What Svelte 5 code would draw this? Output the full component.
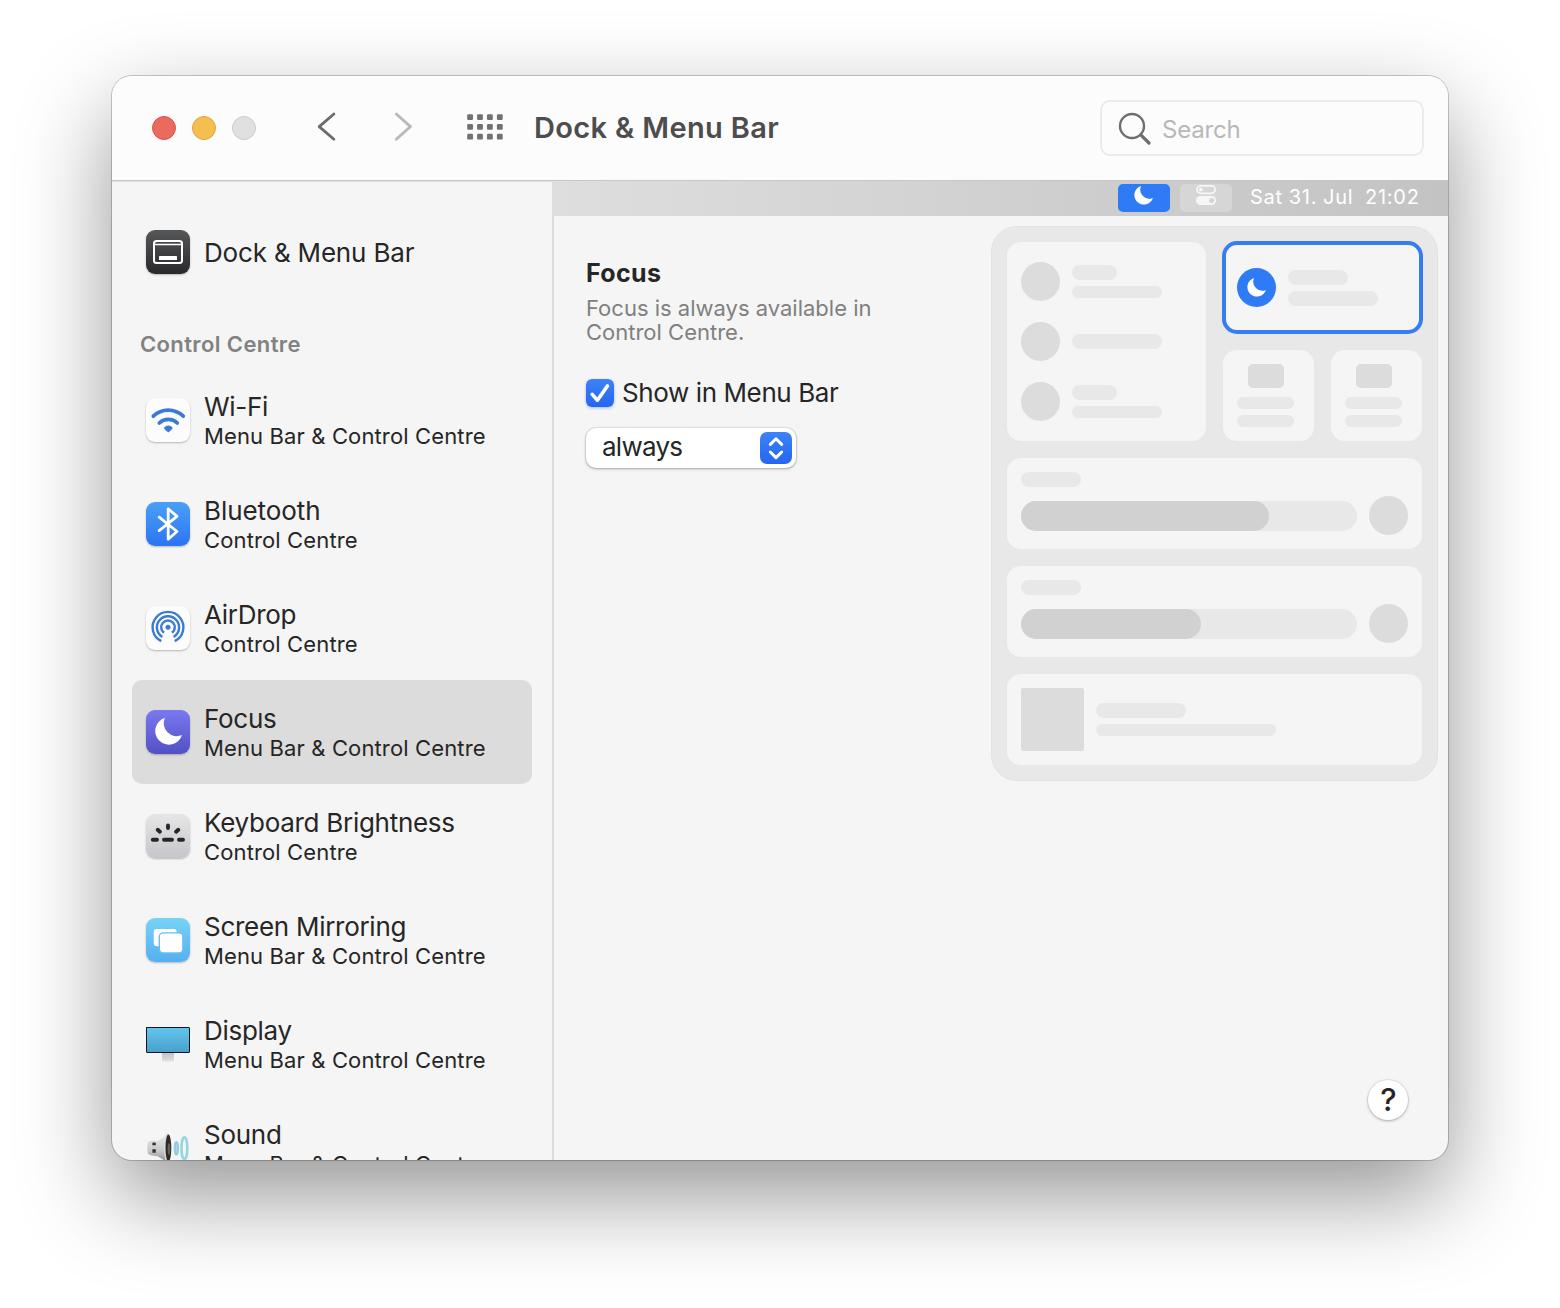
<script>
  const items = [
    { id: 'wifi', title: 'Wi-Fi', sub: 'Menu Bar & Control Centre', tile: 'white' },
    { id: 'bluetooth', title: 'Bluetooth', sub: 'Control Centre', tile: 'blue' },
    { id: 'airdrop', title: 'AirDrop', sub: 'Control Centre', tile: 'white' },
    { id: 'focus', title: 'Focus', sub: 'Menu Bar & Control Centre', tile: 'purple' },
    { id: 'keyboard', title: 'Keyboard Brightness', sub: 'Control Centre', tile: 'grey' },
    { id: 'mirroring', title: 'Screen Mirroring', sub: 'Menu Bar & Control Centre', tile: 'sky' },
    { id: 'display', title: 'Display', sub: 'Menu Bar & Control Centre', tile: 'plain' },
    { id: 'sound', title: 'Sound', sub: 'Menu Bar & Control Centre', tile: 'plain' }
  ];
  const sliders = [248, 180];
  let selected = $state('focus');
  let show = $state(true);
</script>

{#snippet moon()}
  <path d="M19 7.8A13.7 13.7 0 1 0 36 25A12.9 12.9 0 0 1 19 7.8Z" fill="#fff" />
{/snippet}

{#snippet icon(id)}
  <svg viewBox="0 0 44 44" width="44" height="44" fill="none" stroke-linecap="round" stroke-linejoin="round">
    {#if id === 'dock'}
      <rect x="8" y="11" width="28" height="22" rx="2.5" stroke="#fff" stroke-width="2" />
      <path d="M8 14.5H36" stroke="#fff" stroke-width="1.6" />
      <rect x="13" y="26" width="18" height="4" rx="0.6" fill="#fff" />
    {:else if id === 'wifi'}
      <g stroke="#3b7bd6" stroke-width="3.7">
        <path d="M7.3 18.2A21.6 21.6 0 0 1 37.3 18.2" />
        <path d="M13.3 25A13 13 0 0 1 31.3 25" />
      </g>
      <path d="M17.8 29.8Q22.3 25.2 26.8 29.8Q26 32 22.3 34.6Q18.6 32 17.8 29.8Z" fill="#3b7bd6" />
    {:else if id === 'bluetooth'}
      <path d="M13.2 15.2L31 29.5L22.2 37.2V6.8L31 14.4L13.2 28.6" stroke="#fff" stroke-width="2.8" />
    {:else if id === 'airdrop'}
      <circle cx="22" cy="21.3" r="2.5" fill="#3b7bd6" />
      <g stroke="#3b7bd6" stroke-width="2.4" stroke-linecap="butt">
        <path d="M15.3 35.1A15.4 15.4 0 1 1 28.7 35.1" />
        <path d="M16.4 30.9A11.1 11.1 0 1 1 27.6 30.9" />
        <path d="M18 26.8A6.8 6.8 0 1 1 26 26.8" />
      </g>
    {:else if id === 'focus'}
      {@render moon()}
    {:else if id === 'keyboard'}
      <path d="M22 11.4V14M11.7 15.7L13.9 17.7M32.3 15.7L30.1 17.7M6.8 25.8H11M18 25.8H26M33 25.8H37" stroke="#262628" stroke-width="3.9" />
    {:else if id === 'mirroring'}
      <rect x="7.7" y="11" width="23" height="17.3" rx="3" fill="#fff" />
      <rect x="13.3" y="14.9" width="23.6" height="20" rx="3.8" fill="#fff" stroke="#66bff3" stroke-width="1.4" />
    {:else if id === 'display'}
      <defs>
        <linearGradient id="screen" x1="0" y1="0" x2="0" y2="1">
          <stop offset="0" stop-color="#62c6ee" /><stop offset="1" stop-color="#4a9fcb" />
        </linearGradient>
        <linearGradient id="stand" x1="0" y1="0" x2="0" y2="1">
          <stop offset="0" stop-color="#bfbfc2" /><stop offset="1" stop-color="#e2e2e4" />
        </linearGradient>
      </defs>
      <rect x="16" y="30" width="12" height="9.5" rx="1" fill="url(#stand)" />
      <rect x="0.5" y="5.5" width="43" height="25" rx="0.4" fill="url(#screen)" stroke="#10191f" />
    {:else if id === 'sound'}
      <defs>
        <linearGradient id="cone" x1="0" y1="0" x2="0" y2="1">
          <stop offset="0" stop-color="#ececec" /><stop offset="0.6" stop-color="#c8c8c8" /><stop offset="1" stop-color="#868686" />
        </linearGradient>
      </defs>
      <path d="M2 16Q0.5 22 2 28Q6 30.5 11 30Q17 33 21.5 37V7.3Q17 13 11 15Q6 14 2 16Z" fill="url(#cone)" />
      <path d="M6.4 16.8Q8 16.2 9.8 16.8V19.2H6.4ZM6.4 23.2H9.8V26.8H6.4Z" fill="#333" />
      <ellipse cx="21.6" cy="22" rx="3.6" ry="14.8" fill="#dadada" />
      <ellipse cx="22.4" cy="22" rx="2.9" ry="13.6" fill="#2e2a28" />
      <ellipse cx="23" cy="23" rx="1.3" ry="6" fill="#655f5b" />
      <ellipse cx="30.4" cy="22.3" rx="1.7" ry="6.4" stroke="#8fcfdc" stroke-width="2" fill="#a9d8e2" />
      <ellipse cx="38.4" cy="22.3" rx="2.9" ry="11" stroke="#97d5e1" stroke-width="2.6" />
    {/if}
  </svg>
{/snippet}

{#snippet bar(size)}<span class="bar {size}"></span>{/snippet}

<div class="desktop">
  <div class="window">
    <header class="toolbar">
      <div class="lights"><i class="red"></i><i class="amber"></i><i class="off"></i></div>
      <svg class="nav" width="96" height="30" viewBox="0 0 96 30" fill="none" stroke-width="2.8" stroke-linecap="round" stroke-linejoin="round">
        <path d="M17.9 2L3.2 14.6L17.9 27.2" stroke="#6b6b6b" />
        <path d="M80.3 2L94.4 14.6L80.3 27.2" stroke="#b9b9b9" />
      </svg>
      <svg class="grid" width="36" height="26" viewBox="0 0 36 26" fill="#717171">
        {#each [0, 1, 2] as r}
          {#each [0, 1, 2, 3] as c}
            <rect x={0.2 + c * 9.9} y={0.2 + r * 9.8} width="5.8" height="5.8" rx="1.2" />
          {/each}
        {/each}
      </svg>
      <h1>Dock &amp; Menu Bar</h1>
      <label class="search">
        <svg width="34" height="34" viewBox="0 0 34 34" fill="none" stroke="#6e6e6e" stroke-linecap="round">
          <circle cx="14" cy="14" r="12" stroke-width="2.4" />
          <path d="M22.8 22.8L31 31" stroke-width="3.2" />
        </svg>
        <span>Search</span>
      </label>
    </header>

    <div class="body">
      <aside>
        <div class="row first">
          <span class="tile dark">{@render icon('dock')}</span>
          <span class="labels"><span class="title dock">Dock &amp; Menu Bar</span></span>
        </div>
        <h2>Control Centre</h2>
        {#each items as item}
          <button class="row" class:selected={selected === item.id} onclick={() => (selected = item.id)}>
            <span class="tile {item.tile}">{@render icon(item.id)}</span>
            <span class="labels">
              <span class="title {item.id}">{item.title}</span>
              <span class="sub">{item.sub}</span>
            </span>
          </button>
        {/each}
      </aside>

      <main>
        <div class="menubar">
          <span class="pill active">
            <svg width="19" height="19" viewBox="8.8 7.8 27.2 27.4">{@render moon()}</svg>
          </span>
          <span class="pill">
            <svg width="20" height="20" viewBox="0 0 20 20" fill="none">
              <rect x="0.9" y="0.9" width="18.2" height="7.4" rx="3.7" stroke="#f6f6f6" stroke-width="1.8" />
              <circle cx="4.8" cy="4.6" r="2" fill="#f6f6f6" />
              <rect x="0" y="11" width="20" height="9" rx="4.5" fill="#f6f6f6" />
              <circle cx="15.6" cy="15.5" r="2.5" fill="#d4d4d4" />
            </svg>
          </span>
          <span class="clock">Sat 31. Jul&nbsp; 21:02</span>
        </div>

        <div class="content">
          <section class="settings">
            <h3>Focus</h3>
            <p>Focus is always available in<br />Control Centre.</p>
            <button class="check" onclick={() => (show = !show)}>
              <span class="box">
                {#if show}
                  <svg width="28" height="28" viewBox="0 0 28 28" fill="none"><path d="M6.2 15.4L11.4 21.2L21.4 7" stroke="#fff" stroke-width="3.6" stroke-linecap="round" stroke-linejoin="round" /></svg>
                {/if}
              </span>
              <span>Show in Menu Bar</span>
            </button>
            <div class="select">
              <span>always</span>
              <svg width="32" height="32" viewBox="0 0 32 32" fill="none" stroke="#fff" stroke-width="3" stroke-linecap="round" stroke-linejoin="round">
                <path d="M10.3 12.4L16 6.8L21.7 12.4M10.3 20L16 25.6L21.7 20" />
              </svg>
            </div>
          </section>

          <section class="panel">
            <div class="top">
              <div class="card toggles">
                <div class="line"><i class="dot"></i><div class="bars">{@render bar('w45')}{@render bar('w90 thin')}</div></div>
                <div class="line"><i class="dot"></i><div class="bars">{@render bar('w90')}</div></div>
                <div class="line"><i class="dot"></i><div class="bars">{@render bar('w45')}{@render bar('w90 thin')}</div></div>
              </div>
              <div class="right">
                <div class="card focus-card">
                  <i class="dot on"><svg width="19" height="19" viewBox="8.8 7.8 27.2 27.4">{@render moon()}</svg></i>
                  <div class="bars">{@render bar('w60')}{@render bar('w90')}</div>
                </div>
                <div class="pair">
                  {#each [0, 1] as _}
                    <div class="card small"><i class="block"></i>{@render bar('w57 thin')}{@render bar('w57 thin')}</div>
                  {/each}
                </div>
              </div>
            </div>
            {#each sliders as width}
              <div class="card slider">
                {@render bar('w60')}
                <div class="control">
                  <div class="track"><div class="fill" style="width: {width}px"></div></div>
                  <i class="dot"></i>
                </div>
              </div>
            {/each}
            <div class="card media">
              <i class="art"></i>
              <div class="bars">{@render bar('w90')}{@render bar('w180 thin')}</div>
            </div>
          </section>
        </div>
        <button class="help" aria-label="Help">?</button>
      </main>
    </div>
  </div>
</div>

<style>
  :global(body) { background: #fff; }
  * { box-sizing: border-box; }
  .desktop {
    width: 1560px; height: 1308px; padding: 76px 112px 148px; overflow: hidden;
    font-family: Inter, 'Liberation Sans', sans-serif; color: #262626;
  }
  button { font: inherit; color: inherit; border: 0; background: none; padding: 0; text-align: left; }
  h1, h2, h3, p { margin: 0; }
  svg { display: block; flex: none; }
  .window {
    width: 1336px; height: 1084px; border-radius: 20px; overflow: hidden; background: #f5f5f5;
    display: flex; flex-direction: column;
    box-shadow: 0 0 0 1px rgba(0, 0, 0, 0.2), 0 36px 92px rgba(0, 0, 0, 0.42);
  }
  .toolbar {
    flex: none; height: 105px; padding: 0 24px 1px 40px; display: flex; align-items: center;
    background: #fcfcfc; border-bottom: 1px solid #c6c6c6; box-shadow: 0 1px 1px rgba(0, 0, 0, 0.08); position: relative;
  }
  .lights { display: flex; gap: 16px; }
  .lights i { width: 24px; height: 24px; border-radius: 50%; border: 1px solid; }
  .lights .red { background: #ec695f; border-color: #d9544b; }
  .lights .amber { background: #f5bf4f; border-color: #dda63c; }
  .lights .off { background: #e0e0e0; border-color: #cbcbcb; }
  .nav { margin-left: 60px; margin-top: -1px; }
  .grid { margin-left: 55px; margin-bottom: 1px; overflow: visible; }
  h1 { margin-left: 31px; font-size: 29px; font-weight: 600; line-height: 36px; color: #4d4d4d; letter-spacing: 0.36px; white-space: nowrap; }
  .search {
    margin-left: auto; width: 324px; height: 56px; border: 2px solid #ebebeb; border-radius: 10px;
    display: flex; align-items: center; padding: 2px 0 0 16px; gap: 10px;
  }
  .search span { font-size: 24px; line-height: 32px; color: #b8b8b8; padding-top: 2px; letter-spacing: -0.2px; }

  .body { flex: 1; min-height: 0; display: flex; }
  aside { width: 440px; flex: none; padding: 19px 20px 0; overflow: hidden; }
  .row { width: 400px; height: 104px; padding: 0 14px; display: flex; align-items: center; gap: 14px; border-radius: 10px; }
  .selected { background: #dcdcdc; }
  .labels { display: flex; flex-direction: column; padding-top: 2px; }
  .title { font-size: 26px; line-height: 30px; letter-spacing: -0.28px; white-space: nowrap; }
  .title.dock { letter-spacing: -0.18px; }
  .title.bluetooth { letter-spacing: -0.08px; }
  .sub { font-size: 22px; line-height: 28px; letter-spacing: 0.13px; white-space: nowrap; }
  h2 { font-size: 22px; line-height: 28px; font-weight: 600; color: #828282; letter-spacing: 0.38px; margin: 26px 0 10px 8px; }
  .tile { width: 44px; height: 44px; border-radius: 9px; flex: none; box-shadow: 0 1px 2px rgba(0, 0, 0, 0.25); }
  .tile.dark { background: linear-gradient(#565759, #29292b); }
  .tile.white { background: #fcfcfc; }
  .tile.blue { background: linear-gradient(#4ba0f6, #2b74f3); }
  .tile.purple { background: linear-gradient(#7a79f0, #5150c4); }
  .tile.grey { background: linear-gradient(#e6e6e7, #c6c6ca); }
  .tile.sky { background: linear-gradient(#77d3f5, #55aff1); }
  .tile.plain { box-shadow: none; }

  main { flex: 1; border-left: 2px solid #dcdcdc; display: flex; flex-direction: column; position: relative; }
  .menubar {
    height: 35px; flex: none; margin-left: -2px; padding: 3px 28px 0 0; display: flex; justify-content: flex-end; gap: 10px;
    background: linear-gradient(90deg, #dedede, #c3c3c3);
  }
  .pill { width: 52px; height: 28px; border-radius: 5px; background: #d6d6d6; display: flex; justify-content: center; padding-top: 1px; }
  .pill.active { background: #2f7bf6; padding-top: 2px; padding-right: 1px; }
  .clock { margin-left: 8px; width: 170px; font-size: 20px; line-height: 26px; color: #fff; letter-spacing: 0.76px; word-spacing: -0.6px; white-space: nowrap; }

  .content { display: flex; justify-content: space-between; padding: 10px 10px 0 32px; }
  .settings { padding-top: 31px; }
  h3 { font-size: 25px; font-weight: 700; line-height: 32px; letter-spacing: 0.35px; }
  p { font-size: 22px; line-height: 24px; color: #808080; margin-top: 7px; white-space: nowrap; }
  .check { display: flex; gap: 8px; align-items: center; height: 32px; margin-top: 33px; font-size: 26px; line-height: 32px; letter-spacing: -0.4px; white-space: nowrap; }
  .box { width: 28px; height: 28px; border-radius: 6px; background: linear-gradient(#3d82f7, #2566f0); box-shadow: 0 1px 3px rgba(37, 102, 240, 0.4); }
  .select {
    margin-top: 19px; width: 210px; height: 40px; padding: 0 4px 0 16px; border-radius: 10px; background: #fff;
    display: flex; align-items: center; justify-content: space-between; font-size: 26px; line-height: 32px; letter-spacing: -0.75px;
    box-shadow: 0 0 0 1px rgba(0, 0, 0, 0.06), 0 1px 3px rgba(0, 0, 0, 0.3);
  }
  .select span { padding-bottom: 2px; }
  .select svg { border-radius: 7px; background: linear-gradient(#3d82f7, #2566f0); }

  .panel {
    width: 447px; height: 555px; padding: 15px; border: 1px solid #e2e2e2; border-radius: 26px; background: #e8e8e8;
    display: flex; flex-direction: column; gap: 17px;
  }
  .card { background: #f5f5f5; border-radius: 14px; }
  .top { display: flex; gap: 17px; width: 415px; }
  .toggles { width: 199px; height: 199px; padding: 20px 14px; display: flex; flex-direction: column; gap: 21px; }
  .line { display: flex; align-items: center; gap: 12px; }
  .dot { width: 39px; height: 39px; border-radius: 50%; background: #dcdcdc; flex: none; }
  .bars { display: flex; flex-direction: column; gap: 6px; }
  .bar { display: block; height: 15px; border-radius: 8px; background: #e8e8e8; }
  .thin { height: 12px; }
  .w45 { width: 45px; } .w57 { width: 57px; } .w60 { width: 60px; } .w90 { width: 90px; } .w180 { width: 180px; }
  .right { width: 199px; display: flex; flex-direction: column; gap: 16px; }
  .focus-card {
    width: 201px; height: 93px; margin: -1px; border: 4px solid #377df0; border-radius: 15px;
    display: flex; align-items: center; gap: 12px; padding-left: 11px;
  }
  .on { background: #2f7bf6; display: grid; place-items: center; }
  .pair { display: flex; gap: 17px; padding-top: 1px; }
  .small { width: 91px; height: 91px; padding: 14px; display: flex; flex-direction: column; gap: 6px; }
  .block { width: 36px; height: 24px; border-radius: 5px; background: #dcdcdc; margin: 0 0 3px 11px; flex: none; }
  .slider { height: 91px; padding: 14px; display: flex; flex-direction: column; gap: 9px; }
  .control { display: flex; align-items: center; gap: 12px; }
  .track { width: 336px; height: 30px; border-radius: 15px; background: #e8e8e8; }
  .fill { height: 30px; border-radius: 15px; background: #d1d1d1; }
  .media { height: 91px; padding: 14px; display: flex; align-items: center; gap: 12px; }
  .art { width: 63px; height: 63px; border-radius: 2px; background: #dcdcdc; }

  .help {
    margin: auto 40px 40px auto; width: 40px; height: 40px; border-radius: 50%; background: #fff; text-align: center;
    font-size: 31px; font-weight: 500; line-height: 40px; padding-left: 1px; box-shadow: 0 0 0 1px rgba(0, 0, 0, 0.05), 0 1px 3px rgba(0, 0, 0, 0.28);
  }
</style>
